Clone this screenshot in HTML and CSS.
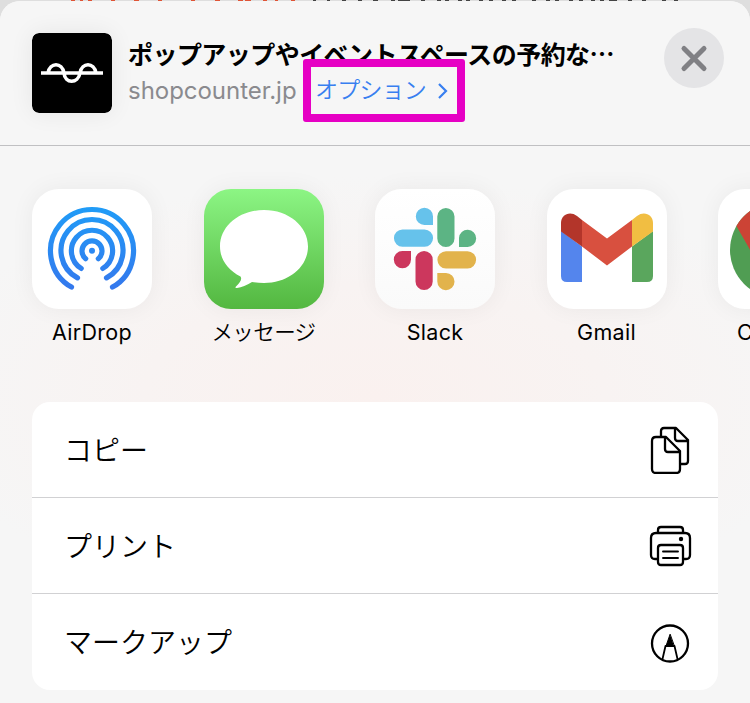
FILE: index.html
```html
<!DOCTYPE html>
<html lang="ja">
<head>
<meta charset="utf-8">
<title>共有</title>
<link rel="stylesheet" href="styles.css">
</head>
<body>
<svg class="backdrop" viewBox="0 0 750 3" aria-hidden="true">
  <path class="ink-red" d="M71 .5H75M80 .5H83M88 .5H92M111 .5H115M134 .5H139M158 .5H162M191 .5H195M215 .5H220M238 .5H243M245 .5H251M263 .5H267M275 .5H278M291 .5H295"/>
  <path class="ink-dark" d="M313 .5H316M327 .5H330M342 .5H346M358 .5H362M373 .5H378M391 .5H395M398 .5H410M421 .5H425M437 .5H441M445 .5H449M458 .5H462M466 .5H470M479 .5H483M489 .5H493M502 .5H506M512 .5H516M532 .5H536M546 .5H550M555 .5H559M569 .5H573M579 .5H583M591 .5H595M600 .5H604M609 .5H617M628 .5H632M642 .5H646M662 .5H666M674 .5H678"/>
</svg>
<main class="sheet">
  <header class="head">
    <svg class="site" viewBox="0 0 80 80"><rect width="80" height="80" rx="7"/><path d="M9 40H71M16 40C18 29 30 29 32 40C33 51 46 51 48 40C50 29 62 29 64 40"/></svg>
    <div class="info">
      <h1>ポップアップやイベントスペースの予約な…</h1>
      <div class="sub"><span class="domain">shopcounter.jp</span><a class="option"><span>オプション</span><svg viewBox="0 0 12 20"><path d="M2 3L9 10L2 17"/></svg></a></div>
    </div>
    <button class="close" aria-label="閉じる"><svg viewBox="0 0 60 60"><path d="M20 20.500L40 40.500M40 20.500L20 40.500"/></svg></button>
  </header>
  <section class="apps">
    <div class="app"><svg class="tile" viewBox="0 0 120 120">
      <defs><linearGradient id="air" gradientUnits="userSpaceOnUse" x1="0" y1="18" x2="0" y2="100"><stop stop-color="#209cf7"/><stop offset="1" stop-color="#3478ed"/></linearGradient></defs>
      <g fill="none" stroke="url(#air)" stroke-width="5.2" stroke-linecap="round"><path d="M39.500 98.100A41.500 41.500 0 1 1 80.500 98.100M45.500 88.900A31 31 0 1 1 74.500 88.900M49.200 79.400A20.600 20.600 0 1 1 70.800 79.400M53.700 69.700A10 10 0 1 1 66.300 69.700"/></g><circle cx="60" cy="61.800" r="3" fill="#2b89f3"/></svg><span class="name latin">AirDrop</span></div>
    <div class="app"><svg class="tile messages" viewBox="0 0 120 120"><path fill="#fff" d="M60 21C84.500 21 104 37 104 57.500C104 78 84.500 94 60 94Q53 94 48 93Q40 98 33 99Q30.500 99 32 97.500Q39 91 36.500 87.500C23.500 81 16 70 16 57.500C16 37 35.500 21 60 21Z"/></svg><span class="name">メッセージ</span></div>
    <div class="app"><svg class="tile slack" viewBox="0 0 120 120">
      <path fill="#66c2eb" d="M58 36H49.500A8.600 8.600 0 1 1 58 27.500ZM27.500 40.500H49.500A8.600 8.600 0 0 1 49.500 57.700H27.500A8.600 8.600 0 0 1 27.500 40.500Z"/>
      <path fill="#5cb484" d="M62.300 27.500A8.600 8.600 0 0 1 79.500 27.500V49.500A8.600 8.600 0 0 1 62.300 49.500ZM84 58V49A8.600 8.600 0 1 1 92.500 58Z"/>
      <path fill="#cc375d" d="M36 62V70.500A8.600 8.600 0 1 1 27.500 62ZM40.500 70.500A8.600 8.600 0 0 1 57.700 70.500V92.500A8.600 8.600 0 0 1 40.500 92.500Z"/>
      <path fill="#e2b34c" d="M71 62.200H92.500A8.600 8.600 0 0 1 92.500 79.400H71A8.600 8.600 0 0 1 71 62.200ZM62.300 84H71A8.600 8.600 0 1 1 62.300 92.500Z"/></svg><span class="name latin">Slack</span></div>
    <div class="app"><svg class="tile" viewBox="0 0 120 120">
      <path fill="#5485ed" d="M14 42L35 57.500V93H20Q14 93 14 87Z"/><path fill="#5aa65d" d="M85 57.500L106 42V87Q106 93 100 93H85Z"/>
      <path fill="#d8503f" d="M35 31L60 49.500L85 31V57.500L60 76.500L35 57.500Z"/><path fill="#b3352a" d="M14 42.500V34C14 25.500 23 21.500 30 27L35 31V57.500Z"/><path fill="#f1be42" d="M106 42.500V34C106 25.500 97 21.500 90 27L85 31V57.500Z"/></svg><span class="name latin">Gmail</span></div>
    <div class="app"><svg class="tile" viewBox="0 0 120 120">
      <circle cx="60" cy="61" r="48" fill="#509d53"/><path fill="#cc4335" d="M18.400 37A48 48 0 0 1 101.600 37H60L39 73Z"/><path fill="#f1be42" d="M101.600 37A48 48 0 0 1 60 109L81 73L60 37Z"/><circle cx="60" cy="61" r="22" fill="#4c87ed" stroke="#fff" stroke-width="5"/></svg><span class="name latin">Chrome</span></div>
  </section>
  <section class="actions">
    <div class="row"><span>コピー</span><svg viewBox="0 0 44 48"><path d="M12 10V5Q12 2 15 2H27L39 14V35Q39 38 36 38H31M26 2V12Q26 15 29 15H39M7 11H17L31 25V43Q31 47 27 47H7Q3 47 3 43V15Q3 11 7 11ZM16 11V23Q16 26 19 26H31"/></svg></div>
    <div class="row"><span>プリント</span><svg viewBox="0 0 44 48"><path d="M9 11V8Q9 5 12 5H31Q34 5 34 8V11M9 37H6Q2 37 2 33V16Q2 11 7 11H36Q41 11 41 16V33Q41 37 37 37H34M12 23H31Q34 23 34 26V40Q34 43 31 43H12Q9 43 9 40V26Q9 23 12 23Z"/><path stroke-width="1.900" d="M14 29.500H29M14 36H29"/><circle cx="32" cy="17" r="2.200" fill="#000" stroke="none"/></svg></div>
    <div class="row"><span>マークアップ</span><svg viewBox="0 0 44 48"><circle cx="21" cy="24.500" r="18"/><path stroke-width="1.800" d="M13.500 40L16.500 27H25.500L28.500 40"/><path d="M21 15.500L17 27H25Z" fill="#000" stroke-width="1"/></svg></div>
  </section>
</main>
<div class="highlight"></div>
</body>
</html>
```
FILE: styles.css
```css
* { box-sizing: border-box; }
body {
  position: relative;
  width: 750px;
  height: 703px;
  margin: 0;
  overflow: hidden;
  background: #dedede;
  color: #000;
  font-family: Inter, "Noto Sans CJK JP DemiLight", "Noto Sans CJK JP", sans-serif;
}
svg { display: block; flex: none; }
.backdrop { position: absolute; top: 0; left: 0; width: 750px; height: 3px; fill: none; stroke-width: 1; }
.ink-red { stroke: #df5436; }
.ink-dark { stroke: #444; }
.sheet {
  position: relative;
  height: 702px;
  margin-top: 1px;
  overflow: hidden;
  border-radius: 20px 20px 0 0;
  background: radial-gradient(ellipse 460px 220px at 375px 395px, #faf1ef, #f8f3f2 50%, rgba(246, 246, 246, 0)), #f6f6f6;
}
.head {
  display: flex;
  height: 145px;
  padding: 32px 26px 0 32px;
  border-bottom: 1px solid #c0c0c2;
  background: #f6f6f6;
}
.site { width: 80px; height: 80px; border-radius: 7px; box-shadow: 0 0 24px rgba(0, 0, 0, .07); }
.site path { fill: none; stroke: #fff; stroke-width: 3.6; }
.info { flex: 1; margin-left: 16px; white-space: nowrap; }
h1 { margin: 2px 0 0; font-size: 25px; font-weight: 700; line-height: 36px; letter-spacing: -.55px; font-family: "Noto Sans CJK JP", sans-serif; }
.sub { display: flex; align-items: center; height: 39px; font-size: 24px; }
.domain { width: 187px; color: #8a8a8e; letter-spacing: -.03px; }
.option { display: flex; align-items: center; color: #387ff0; font-size: 23px; }
.option span { width: 122px; letter-spacing: -.8px; font-weight: 350; line-height: 34px; padding-bottom: 1px; }
.option svg { width: 12px; height: 20px; fill: none; stroke: currentColor; stroke-width: 2.2; }
.close { width: 60px; height: 60px; margin-top: -5px; padding: 0; border: 0; border-radius: 50%; background: #e4e4e6; }
.close svg { width: 60px; height: 60px; stroke: #808084; stroke-width: 5; stroke-linecap: round; }
.apps { display: flex; gap: 51.5px; height: 256px; padding: 43px 0 0 32px; }
.app { flex: none; display: flex; flex-direction: column; align-items: center; width: 120px; }
.tile { width: 120px; height: 120px; border-radius: 27px; background: #fff; box-shadow: 0 0 24px rgba(0, 0, 0, .055); }
.messages { background: linear-gradient(#8cf584, #53b740); }
.slack { background: linear-gradient(#fff, #fafafa); }
.name { margin-top: 5px; font-size: 21.5px; line-height: 36px; white-space: nowrap; font-weight: 350; letter-spacing: -.6px; }
.latin { letter-spacing: .3px; font-weight: 400; }
.actions { width: 686px; height: 288px; margin-left: 32px; border-radius: 18px; background: #fff; }
.row { display: flex; align-items: center; justify-content: space-between; height: 96px; padding: 0 25px 0 32px; font-size: 28px; font-weight: 350; }
.row:not(:last-child) { border-bottom: 1px solid #d1d1d3; }
.row span { padding-bottom: 2px; }
.row svg { width: 44px; height: 48px; margin-top: 1px; fill: none; stroke: #000; stroke-width: 2.3; stroke-linejoin: round; stroke-linecap: round; }
.highlight { position: absolute; top: 59px; left: 303px; width: 162px; height: 63px; border: 8px solid #e600c4; border-radius: 3px; }
```
